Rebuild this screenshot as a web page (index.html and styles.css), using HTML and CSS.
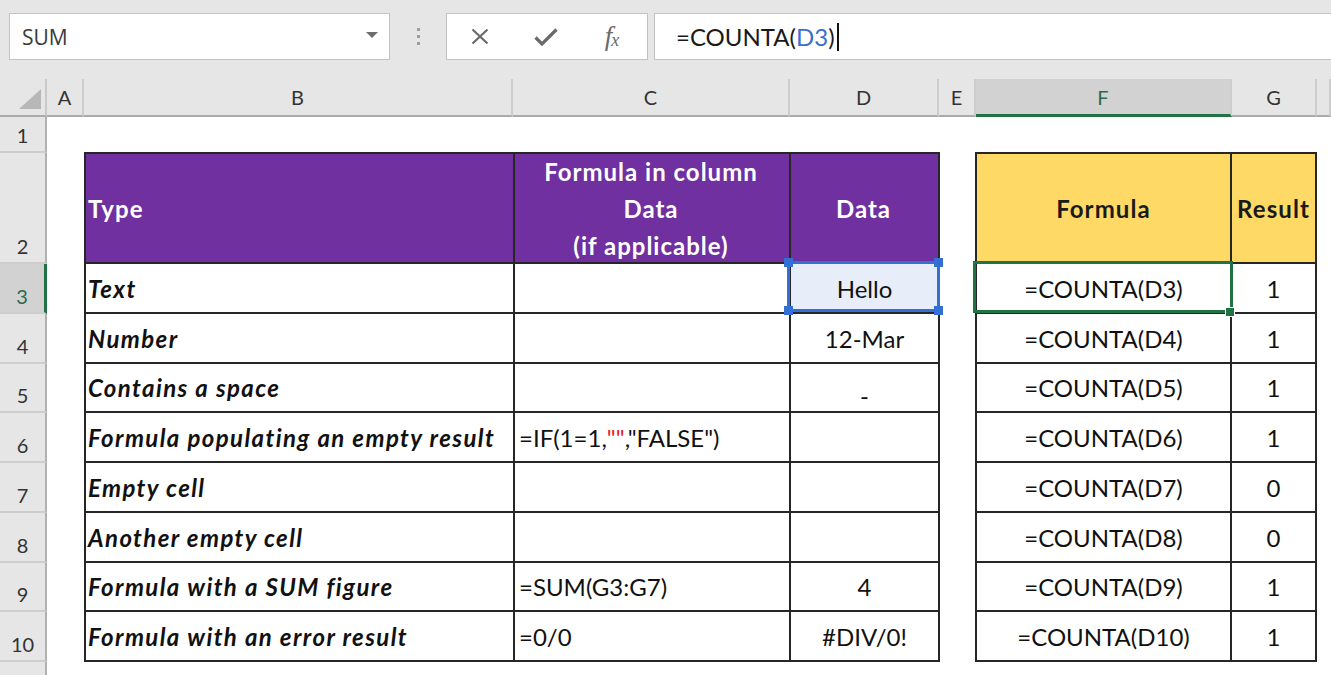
FILE: index.html
```html
<!DOCTYPE html>
<html lang="en">
<head>
    <meta charset="UTF-8">
    <title>COUNTA examples</title>
    <link rel="stylesheet" href="styles.css">
</head>
<body>

    <!-- Formula bar -->
    <div class="formula-bar">
        <div class="name-box"><span>SUM</span><span class="dropdown"></span></div>
        <div class="grip"><i></i><i></i><i></i></div>
        <div class="fn-box">
            <div class="slot">
                <svg width="18" height="17" viewBox="0 0 18 17"><path d="M1.5 1.5L16.5 15.5M16.5 1.5L1.5 15.5" stroke="#6a6a6a" stroke-width="2.2" fill="none"/></svg>
            </div>
            <div class="slot">
                <svg width="24" height="18" viewBox="0 0 24 18"><path d="M1.5 9.5L8 16L22.5 1.5" stroke="#6a6a6a" stroke-width="3.2" fill="none"/></svg>
            </div>
            <div class="slot fx"><i>f</i><i class="fx-x">x</i></div>
        </div>
        <div class="formula-input">=COUNTA(<span class="ref-blue">D3</span>)<span class="caret"></span></div>
    </div>

    <!-- Sheet -->
    <div class="sheet">
        <div class="corner">
            <svg width="22" height="20" viewBox="0 0 22 20"><polygon points="22,0 22,20 0,20" fill="#b7b7b7"/></svg>
        </div>

        <div class="col-heads">
            <div class="ch col-a">A</div>
            <div class="ch col-b">B</div>
            <div class="ch col-c">C</div>
            <div class="ch col-d">D</div>
            <div class="ch col-e">E</div>
            <div class="ch col-f selected">F</div>
            <div class="ch col-g">G</div>
            <div class="ch col-h"></div>
        </div>

        <div class="row-heads">
            <div class="rh row-1">1</div>
            <div class="rh row-2">2</div>
            <div class="rh row-n selected">3</div>
            <div class="rh row-n">4</div>
            <div class="rh row-s">5</div>
            <div class="rh row-n">6</div>
            <div class="rh row-n">7</div>
            <div class="rh row-n">8</div>
            <div class="rh row-s">9</div>
            <div class="rh row-n">10</div>
            <div class="rh row-last">11</div>
        </div>

        <div class="cells">
            <div class="tbl tbl-main">
                <div class="cell head-purple">Type</div>
                <div class="cell head-purple mid wrap">Formula in column<br>Data<br>(if applicable)</div>
                <div class="cell head-purple mid">Data</div>

                <div class="cell label">Text</div>
                <div class="cell"></div>
                <div class="cell mid ref-cell">Hello</div>

                <div class="cell label">Number</div>
                <div class="cell"></div>
                <div class="cell mid">12-Mar</div>

                <div class="cell label">Contains a space</div>
                <div class="cell"></div>
                <div class="cell mid dash">-</div>

                <div class="cell label">Formula populating an empty result</div>
                <div class="cell">=IF(1=1,<span class="quote">""</span>,"FALSE")</div>
                <div class="cell"></div>

                <div class="cell label">Empty cell</div>
                <div class="cell"></div>
                <div class="cell"></div>

                <div class="cell label">Another empty cell</div>
                <div class="cell"></div>
                <div class="cell"></div>

                <div class="cell label">Formula with a SUM figure</div>
                <div class="cell">=SUM(G3:G7)</div>
                <div class="cell mid">4</div>

                <div class="cell label">Formula with an error result</div>
                <div class="cell">=0/0</div>
                <div class="cell mid">#DIV/0!</div>
            </div>

            <div class="tbl tbl-count">
                <div class="cell head-yellow mid">Formula</div>
                <div class="cell head-yellow mid">Result</div>

                <div class="cell mid active-cell">=COUNTA(D3)</div>
                <div class="cell mid">1</div>
                <div class="cell mid">=COUNTA(D4)</div>
                <div class="cell mid">1</div>
                <div class="cell mid">=COUNTA(D5)</div>
                <div class="cell mid">1</div>
                <div class="cell mid">=COUNTA(D6)</div>
                <div class="cell mid">1</div>
                <div class="cell mid">=COUNTA(D7)</div>
                <div class="cell mid">0</div>
                <div class="cell mid">=COUNTA(D8)</div>
                <div class="cell mid">0</div>
                <div class="cell mid">=COUNTA(D9)</div>
                <div class="cell mid">1</div>
                <div class="cell mid">=COUNTA(D10)</div>
                <div class="cell mid">1</div>
            </div>
        </div>
    </div>

</body>
</html>
```

FILE: styles.css
```css
* {
    box-sizing: border-box;
}
body {
    margin: 0;
    width: 1331px;
    height: 675px;
    overflow: hidden;
    background: #fff;
    font-family: Lato, "Liberation Sans", sans-serif;
    color: #111;
}

/* formula bar */
.formula-bar {
    height: 79px;
    background: #e6e6e6;
    display: flex;
    align-items: flex-start;
    padding: 13px 0 0 9px;
}
.name-box {
    width: 381px;
    height: 47px;
    background: #fff;
    border: 1px solid #c3c3c3;
    display: flex;
    align-items: center;
    justify-content: space-between;
    padding: 0 11px 0 12px;
    font-family: "Open Sans", sans-serif;
    font-size: 21px;
    color: #3a3a3a;
}
.dropdown {
    width: 0;
    height: 0;
    border-left: 6px solid transparent;
    border-right: 6px solid transparent;
    border-top: 6px solid #6d6d6d;
    margin-top: -4px;
}
.grip {
    width: 56px;
    height: 47px;
    display: flex;
    flex-direction: column;
    align-items: center;
    justify-content: center;
    gap: 4px;
}
.grip i {
    width: 3px;
    height: 3px;
    background: #9d9d9d;
}
.fn-box {
    width: 202px;
    height: 47px;
    background: #fff;
    border: 1px solid #c3c3c3;
    display: flex;
    align-items: center;
}
.slot {
    width: 66px;
    display: flex;
    justify-content: center;
    align-items: center;
}
.fx {
    font-family: "Liberation Serif", serif;
    color: #6a6a6a;
    font-size: 27px;
}
.fx-x {
    font-size: 18px;
    margin-top: 7px;
    margin-left: -1px;
}
.formula-input {
    flex: 1;
    margin-left: 6px;
    height: 47px;
    background: #fff;
    border: 1px solid #c3c3c3;
    border-right: none;
    display: flex;
    align-items: center;
    padding-left: 21px;
    font-size: 24px;
    color: #1a1a1a;
}
.ref-blue {
    color: #3a6fd0;
}
.caret {
    width: 2px;
    height: 28px;
    background: #111;
    margin-left: 2px;
}

/* sheet */
.sheet {
    display: grid;
    grid-template-columns: 47px 1fr;
    grid-template-rows: 38px 1fr;
    height: 596px;
}
.corner {
    background: #e6e6e6;
    border-right: 2px solid #c9c9c9;
    border-bottom: 2px solid #ababab;
    display: flex;
    align-items: flex-end;
    justify-content: flex-end;
    padding: 0 4px 6px 0;
}
.col-heads {
    display: flex;
    background: #e6e6e6;
}
.ch {
    flex-shrink: 0;
    height: 38px;
    border-right: 2px solid #cdcdcd;
    border-bottom: 2px solid #ababab;
    display: flex;
    align-items: center;
    justify-content: center;
    font-size: 20px;
    color: #333;
}
.col-a { width: 37px; }
.col-b { width: 429px; }
.col-c { width: 277px; }
.col-d { width: 149px; }
.col-e { width: 37px; }
.col-f { width: 256px; }
.col-g { width: 85px; }
.col-h { flex: 1; }
.ch.selected {
    background: #d2d2d2;
    border-bottom: 3px solid #217346;
    color: #2c6b4c;
}

.row-heads {
    display: flex;
    flex-direction: column;
    background: #e6e6e6;
    overflow: hidden;
}
.rh {
    flex-shrink: 0;
    border-right: 2px solid #b0b0b0;
    border-bottom: 2px solid #cdcdcd;
    display: flex;
    align-items: flex-end;
    justify-content: center;
    padding-bottom: 6px;
    font-size: 20px;
    line-height: 1;
    color: #333;
}
.row-1 { height: 36px; }
.row-2 { height: 111px; }
.row-n { height: 50px; }
.row-s { height: 49px; }
.row-last {
    flex: 1;
    align-items: flex-start;
    padding: 9px 0 0;
    border-bottom: none;
}
.rh.selected {
    background: #d2d2d2;
    border-right: 3px solid #217346;
    color: #2c6b4c;
}

/* tables */
.cells {
    display: flex;
    align-items: flex-start;
    gap: 35px;
    padding: 35px 0 0 37px;
    background: #fff;
    overflow: hidden;
}
.tbl {
    display: grid;
    border-top: 2px solid #262626;
    border-left: 2px solid #262626;
    grid-template-rows: 110px 50px 50px 49px 50px 50px 50px 49px 50px;
}
.tbl-main {
    grid-template-columns: 429px 276px 149px;
}
.tbl-count {
    grid-template-columns: 255px 85px;
}
.cell {
    border-right: 2px solid #262626;
    border-bottom: 2px solid #262626;
    display: flex;
    align-items: center;
    padding: 0 4px;
    font-size: 24px;
    white-space: nowrap;
}
.label {
    font-weight: bold;
    font-style: italic;
    letter-spacing: 1.4px;
    padding-left: 2px;
}
.mid {
    justify-content: center;
    text-align: center;
}
.head-purple {
    background: #7030a0;
    color: #fff;
    font-weight: bold;
    letter-spacing: 1px;
    padding-left: 2px;
}
.head-yellow {
    background: #ffd966;
    color: #1a1a1a;
    font-weight: bold;
    letter-spacing: 1.1px;
}
.wrap {
    white-space: normal;
    line-height: 37px;
}
.quote {
    color: #e8202a;
}
.dash {
    padding-top: 16px;
}

/* D3 reference highlight */
.ref-cell {
    position: relative;
    background: #e8eef9;
}
.ref-cell::before {
    content: "";
    position: absolute;
    top: -3px;
    left: -4px;
    right: -2px;
    bottom: 0;
    border: 3px solid #3470d4;
}
.ref-cell::after {
    content: "";
    position: absolute;
    top: -6px;
    left: -7px;
    right: -5px;
    bottom: -3px;
    background:
        linear-gradient(#3470d4, #3470d4) left top / 9px 9px no-repeat,
        linear-gradient(#3470d4, #3470d4) right top / 9px 9px no-repeat,
        linear-gradient(#3470d4, #3470d4) left bottom / 9px 9px no-repeat,
        linear-gradient(#3470d4, #3470d4) right bottom / 9px 9px no-repeat;
}

/* F3 active cell */
.active-cell {
    position: relative;
}
.active-cell::before {
    content: "";
    position: absolute;
    top: -3px;
    left: -4px;
    right: -3px;
    bottom: -1px;
    border: 3px solid #217346;
}
.active-cell::after {
    content: "";
    position: absolute;
    right: -5px;
    bottom: -5px;
    width: 8px;
    height: 8px;
    background: #217346;
    border: 1px solid #fff;
}
```
